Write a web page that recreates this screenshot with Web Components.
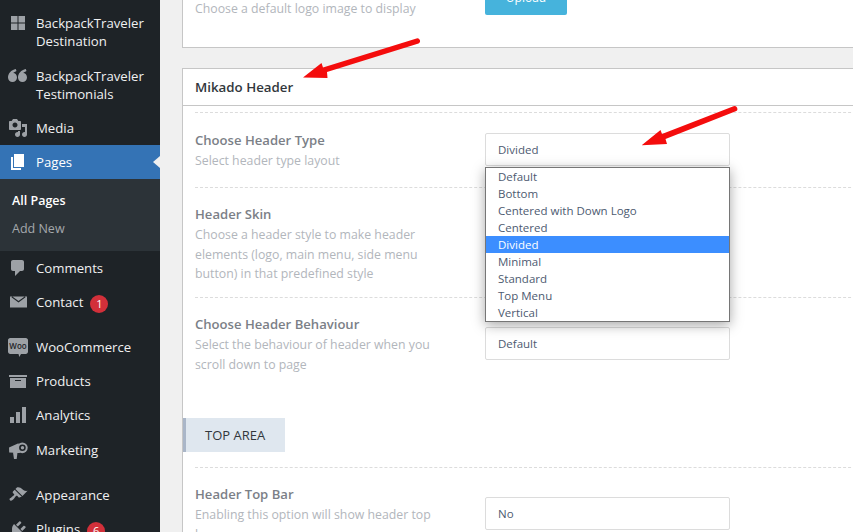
<!DOCTYPE html>
<html lang="en">
<head>
<meta charset="utf-8">
<title>Mikado Header</title>
<style>
  html, body { margin: 0; height: 532px; overflow: hidden; background: #f0f0f0; }
  body { font-family: "Open Sans", sans-serif; }
</style>
</head>
<body>
<admin-shell>
  <admin-sidebar slot="sidebar">
    <menu-item icon="grid" two-line style="height:54px;padding-top:9px">BackpackTraveler<br>Destination</menu-item>
    <menu-item icon="quote" two-line style="padding-top:8px">BackpackTraveler<br>Testimonials</menu-item>
    <menu-item icon="media">Media</menu-item>
    <menu-item icon="pages" current>Pages</menu-item>
    <sub-menu>
      <sub-item current>All Pages</sub-item>
      <sub-item>Add New</sub-item>
    </sub-menu>
    <menu-item icon="comments">Comments</menu-item>
    <menu-item icon="mail" badge="1">Contact</menu-item>
    <menu-sep></menu-sep>
    <menu-item icon="woo">WooCommerce</menu-item>
    <menu-item icon="box">Products</menu-item>
    <menu-item icon="bars">Analytics</menu-item>
    <menu-item icon="mega" style="height:35px;padding-top:1px">Marketing</menu-item>
    <menu-sep></menu-sep>
    <menu-item icon="brush">Appearance</menu-item>
    <menu-item icon="plug" badge="6">Plugins</menu-item>
  </admin-sidebar>

  <options-panel class="cut">
    <option-field desc-only>
      <span slot="desc">Choose a default logo image to display</span>
      <upload-button slot="control">Upload</upload-button>
    </option-field>
  </options-panel>

  <options-panel heading="Mikado Header">
    <option-field first label="Choose Header Type">
      <span slot="desc">Select header type layout</span>
      <select-box slot="control" value="Divided"></select-box>
      <select-list slot="control" selected="Divided"></select-list>
    </option-field>
    <option-field label="Header Skin" tall>
      <span slot="desc">Choose a header style to make header elements (logo, main menu, side menu button) in that predefined style</span>
    </option-field>
    <option-field label="Choose Header Behaviour" class="last">
      <span slot="desc">Select the behaviour of header when you scroll down to page</span>
      <select-box slot="control" value="Default"></select-box>
    </option-field>
    <section-tag>TOP AREA</section-tag>
    <option-field label="Header Top Bar">
      <span slot="desc">Enabling this option will show header top bar</span>
      <select-box slot="control" value="No"></select-box>
    </option-field>
  </options-panel>
</admin-shell>
<red-arrows></red-arrows>

<script>
  const ICONS = {
    grid: '<path d="M3 3h6.500v6.500H3zM10.500 3H17v6.500h-6.500zM3 10.500h6.500V17H3zM10.500 10.500H17V17h-6.500z"/>',
    quote: '<path d="M4.500 16C2 16 0 14 0 11.500 0 7.500 3 4 7.800 3l.7 1.900C6.500 5.700 5.500 6.800 5.200 7.100 7.300 7.100 9 9.100 9 11.500 9 14 7 16 4.500 16zM14.500 16C12 16 10 14 10 11.500 10 7.500 13 4 17.800 3l.7 1.900c-2 .8-3 1.900-3.300 2.200 2.100 0 3.800 2 3.800 4.400 0 2.500-2 4.500-4.500 4.500z"/>',
    media: '<path d="M13 11V4c0-.55-.45-1-1-1h-1.670L9 1H5L3.670 3H2c-.55 0-1 .45-1 1v7c0 .55.45 1 1 1h10c.55 0 1-.45 1-1zM7 4.500c1.380 0 2.500 1.120 2.500 2.500S8.380 9.500 7 9.500 4.500 8.380 4.500 7 5.620 4.500 7 4.500zM14 6h5v10.500c0 1.380-1.120 2.500-2.500 2.500S14 17.880 14 16.500s1.120-2.500 2.500-2.500c.17 0 .34.020.5.050V9h-3V6zm-4 8.050V13h2v3.500c0 1.380-1.120 2.500-2.500 2.500S7 17.880 7 16.500 8.120 14 9.500 14c.17 0 .34.020.5.050z"/>',
    pages: '<path d="M6 15V2h10v13H6zm-1 1h8v2H3V5h2v11z"/>',
    comments: '<path d="M5 2h9c1.100 0 2 .9 2 2v7c0 1.100-.9 2-2 2h-2l-5 5v-5H5c-1.100 0-2-.9-2-2V4c0-1.100.9-2 2-2z"/>',
    mail: '<path fill-rule="evenodd" d="M2 4.500h17v11H2zM3.500 5.300l7 5.200 7-5.200-.8-.8-6.200 4.400L4.300 4.500z"/>',
    woo: '<path d="M2.200 1h15.600C19 1 20 2 20 3.200v11.600c0 1.200-1 2.200-2.200 2.200H13l-1.700 3-.8-3H2.200C1 17 0 16 0 14.800V3.200C0 2 1 1 2.200 1z"/><text x="10" y="11.900" text-anchor="middle" font-family="Open Sans, sans-serif" font-size="8" font-weight="600" fill="#1e2327">Woo</text>',
    box: '<path d="M19 4v2H1V4h18zM2 7h16v10H2V7zm11 3V9H7v1h6z"/>',
    bars: '<path d="M18 18V2h-4v16h4zm-6 0V7H8v11h4zm-6 0v-6H2v6h4z"/>',
    mega: '<path d="M1 7.500 10.500 3.300 12 13 1.200 12.500zM5 12.500h4.500l-.8 6.500H6z"/><circle cx="14.300" cy="7.800" r="5.400"/><circle cx="14.400" cy="7.800" r="3.300" fill="#1e2327"/><circle cx="14.500" cy="7.800" r="1.700"/>',
    brush: '<path d="M14.480 11.060L7.410 3.990l1.500-1.500c.5-.56 2.300-.47 3.510.32 1.210.8 1.430 1.280 2.910 2.100 1.180.64 2.450 1.260 4.230.85zm-.71.71L6.700 4.700 4.930 6.470c-.39.39-.39 1.020 0 1.410l1.060 1.060c.39.39.39 1.030 0 1.420-.6.600-1.430 1.110-2.210 1.690-.35.260-.700.530-1.010.840C1.430 13.230 1 14.230 2 15.230c.97.970 2.100.460 3.440-.900.320-.320.600-.670.860-1.010.590-.780 1.090-1.610 1.700-2.210.39-.390 1.020-.390 1.410 0l1.060 1.060c.39.390 1.020.390 1.410 0z"/>',
    plug: '<path d="M13.110 4.360L9.870 7.600 8 5.730l3.240-3.240c.35-.34 1.050-.2 1.560.32.520.510.660 1.210.310 1.550zm-8 1.770l.91-1.120 9.010 9.010-1.190.84c-.71.710-2.630 1.160-3.820 1.160H6.140L4.900 17.260c-.59.590-1.540.59-2.120 0-.59-.58-.59-1.530 0-2.120l1.240-1.240v-3.880c0-1.130.4-3.050 1.110-3.760zm7.260 3.970l3.240-3.240c.34-.35 1.040-.21 1.550.31.520.510.660 1.210.310 1.550l-3.240 3.250z"/>'
  };

  const HEADER_TYPES = ['Default', 'Bottom', 'Centered with Down Logo', 'Centered', 'Divided', 'Minimal', 'Standard', 'Top Menu', 'Vertical'];

  // small helper so every element only has to give its template
  class ShadowEl extends HTMLElement {
    constructor() {
      super();
      this.attachShadow({ mode: 'open' });
    }
    connectedCallback() {
      this.shadowRoot.innerHTML = this.template();
    }
  }

  class AdminShell extends ShadowEl {
    template() {
      return `
        <style>
          :host { display: grid; grid-template-columns: 160px 1fr; height: 532px; overflow: hidden; }
          .side { grid-row: 1; grid-column: 1; overflow: hidden; }
          .main { grid-row: 1; grid-column: 2; min-width: 0; padding-left: 22px; margin-top: -20px; display: flex; flex-direction: column; gap: 20px; }
        </style>
        <div class="side"><slot name="sidebar"></slot></div>
        <div class="main"><slot></slot></div>`;
    }
  }

  class AdminSidebar extends ShadowEl {
    template() {
      return `
        <style>
          :host { display: flex; flex-direction: column; height: 532px; padding-top: 5px; box-sizing: border-box; background: #1e2327; font-family: "Open Sans", sans-serif; font-size: 13.200px; color: #f0f0f1; }
        </style>
        <slot></slot>`;
    }
  }

  class MenuItem extends ShadowEl {
    template() {
      const badge = this.getAttribute('badge');
      return `
        <style>
          :host { display: flex; flex: none; align-items: center; gap: 8px; height: 34px; box-sizing: border-box; padding-left: 8px; position: relative; line-height: 18px; color: #f0f0f1; }
          :host([two-line]) { height: 52px; align-items: flex-start; }
          :host([two-line]) svg { margin-top: -1px; }
          :host([current]) { background: #3473b5; color: #fff; }
          :host([current])::after { content: ""; position: absolute; right: 0; top: 11px; border: 6px solid transparent; border-right-color: #f0f0f0; border-left-width: 0; border-right-width: 7px; }
          svg { width: 20px; height: 20px; flex: none; fill: #9da1a6; }
          :host([current]) svg { fill: #fff; }
          .badge { display: inline-flex; align-items: center; justify-content: center; width: 18px; height: 18px; margin-left: 7px; border-radius: 50%; background: #d2303a; color: #fff; font-size: 11px; position: relative; top: 1px; }
        </style>
        <svg viewBox="0 0 20 20">${ICONS[this.getAttribute('icon')] || ''}</svg>
        <div><slot></slot>${badge ? `<span class="badge">${badge}</span>` : ''}</div>`;
    }
  }

  class SubMenu extends ShadowEl {
    template() {
      return `
        <style>
          :host { display: block; flex: none; height: 72px; box-sizing: border-box; padding: 8px 0; background: #2c3338; }
        </style>
        <slot></slot>`;
    }
  }

  class SubItem extends ShadowEl {
    template() {
      return `
        <style>
          :host { display: block; height: 28px; line-height: 28px; padding-left: 12px; font-size: 12.500px; color: #a4a8ac; }
          :host([current]) { color: #fff; font-weight: 600; }
        </style>
        <slot></slot>`;
    }
  }

  class MenuSep extends ShadowEl {
    template() {
      return `<style>:host { display: block; flex: none; height: 11px; }</style>`;
    }
  }

  class OptionsPanel extends ShadowEl {
    template() {
      const heading = this.getAttribute('heading');
      return `
        <style>
          :host { display: block; flex: none; width: 700px; background: #fff; border: 1px solid #c6c6c6; box-sizing: border-box; font-family: "Open Sans", sans-serif; }
          :host(.cut) { height: 68px; overflow: hidden; }
          h2 { margin: 0 0 6px; height: 36px; line-height: 36px; padding-left: 12px; border-bottom: 1px solid #c6c6c6; font-size: 13.300px; font-weight: 600; color: #32373c; }
        </style>
        ${heading ? `<h2>${heading}</h2>` : ''}
        <slot></slot>`;
    }
  }

  class OptionField extends ShadowEl {
    template() {
      const label = this.getAttribute('label');
      return `
        <style>
          :host { display: block; box-sizing: border-box; margin-left: 12px; padding-top: 16px; border-top: 1px dashed #dcdcdc; }
          :host([first]) { padding-top: 17px; height: 75px; }
          :host([tall]) { height: 110px; }
          :host(.last) { height: 93px; }
          :host([desc-only]) { border-top: 0; padding-top: 18px; }
          .row { display: grid; grid-template-columns: 290px 245px; align-items: center; }
          :host([desc-only]) .row { align-items: start; }
          .text { width: 250px; }
          .label { line-height: 20px; margin-bottom: 1px; font-size: 13.100px; font-weight: 600; color: #7b8087; }
          .desc { line-height: 19.700px; font-size: 12.300px; color: #b2b6bc; }
          .ctl { position: relative; }
        </style>
        <div class="row">
          <div class="text">
            ${label ? `<div class="label">${label}</div>` : ''}
            <div class="desc"><slot name="desc"></slot></div>
          </div>
          <div class="ctl"><slot name="control"></slot></div>
        </div>`;
    }
  }

  class SelectBox extends ShadowEl {
    template() {
      return `
        <style>
          :host { display: block; height: 33px; margin-bottom: 1px; box-sizing: border-box; padding-left: 12px; line-height: 31px; background: #fff; border: 1px solid #dcdcdc; border-radius: 2px; font-size: 11.500px; color: #4d5a70; }
        </style>
        ${this.getAttribute('value')}`;
    }
  }

  // open list of the native select, lies over the fields below it
  class SelectList extends ShadowEl {
    template() {
      const selected = this.getAttribute('selected');
      const rows = HEADER_TYPES.map(t => `<div class="opt${t === selected ? ' on' : ''}">${t}</div>`).join('');
      return `
        <style>
          :host { display: block; position: absolute; left: 0; top: 34px; width: 245px; box-sizing: border-box; z-index: 5; background: #fff; border: 1px solid #767676; box-shadow: 0 3px 12px rgba(0,0,0,.35); font-size: 11.500px; color: #4d5a70; }
          .opt { height: 17px; line-height: 17px; padding-left: 12px; }
          .on { background: #3c8eff; color: #fff; }
        </style>
        ${rows}`;
    }
  }

  class UploadButton extends ShadowEl {
    template() {
      return `
        <style>
          :host { display: block; width: 82px; height: 34px; margin-top: -18px; text-align: center; line-height: 34px; background: #46b3dc; border-radius: 2px; font-size: 12px; color: #fff; }
        </style>
        <slot></slot>`;
    }
  }

  class SectionTag extends ShadowEl {
    template() {
      return `
        <style>
          :host { display: block; width: 102px; height: 34px; box-sizing: border-box; margin: 28px 0 15px; padding-left: 19px; line-height: 35px; background: #dfe7ef; border-left: 3px solid #aab6c8; font-size: 13px; color: #32373c; }
        </style>
        <slot></slot>`;
    }
  }

  // annotation arrows drawn over the screenshot
  class RedArrows extends ShadowEl {
    template() {
      return `
        <style>
          :host { position: absolute; left: 0; top: 0; width: 853px; height: 532px; pointer-events: none; }
          svg { display: block; }
        </style>
        <svg width="853" height="532" fill="#f40d0d">
          <path d="M303 77.500 321.500 63 323 67.500 416.500 38.500a2.700 2.700 0 0 1 2 5L327 72 327.500 78z"/>
          <path d="M641.700 145.300 660.500 130 662 134 733.500 106.300a2.700 2.700 0 0 1 2.200 5L665.500 139 667 144z"/>
        </svg>`;
    }
  }

  customElements.define('admin-shell', AdminShell);
  customElements.define('admin-sidebar', AdminSidebar);
  customElements.define('menu-item', MenuItem);
  customElements.define('sub-menu', SubMenu);
  customElements.define('sub-item', SubItem);
  customElements.define('menu-sep', MenuSep);
  customElements.define('options-panel', OptionsPanel);
  customElements.define('option-field', OptionField);
  customElements.define('select-box', SelectBox);
  customElements.define('select-list', SelectList);
  customElements.define('upload-button', UploadButton);
  customElements.define('section-tag', SectionTag);
  customElements.define('red-arrows', RedArrows);
</script>
</body>
</html>
